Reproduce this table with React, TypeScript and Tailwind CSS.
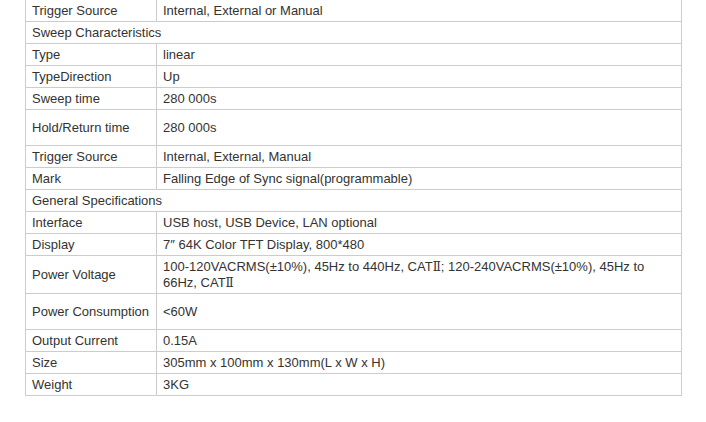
import React from "react";

type Row =
  | { kind: "head"; label: string }
  | { kind: "row"; label: string; value: React.ReactNode; h?: string };

const Two = () => <span className="font-['DejaVu_Serif',serif] text-[12px]">&#8545;</span>;

const rows: Row[] = [
  { kind: "row", label: "Trigger Source", value: "Internal, External or Manual" },
  { kind: "head", label: "Sweep Characteristics" },
  { kind: "row", label: "Type", value: "linear" },
  { kind: "row", label: "TypeDirection", value: "Up" },
  { kind: "row", label: "Sweep time", value: "280 000s" },
  { kind: "row", label: "Hold/Return time", value: "280 000s", h: "h-[36px]" },
  { kind: "row", label: "Trigger Source", value: "Internal, External, Manual" },
  { kind: "row", label: "Mark", value: "Falling Edge of Sync signal(programmable)" },
  { kind: "head", label: "General Specifications" },
  { kind: "row", label: "Interface", value: "USB host, USB Device, LAN optional" },
  { kind: "row", label: "Display", value: "7\u2033 64K Color TFT Display, 800*480" },
  {
    kind: "row",
    label: "Power Voltage",
    value: (
      <>
        100-120VACRMS(±10%), 45Hz to 440Hz, CAT<Two />; 120-240VACRMS(±10%), 45Hz to
        <br />
        66Hz, CAT<Two />
      </>
    ),
    h: "h-[38px]",
  },
  { kind: "row", label: "Power Consumption", value: "<60W", h: "h-[36px]" },
  { kind: "row", label: "Output Current", value: "0.15A" },
  { kind: "row", label: "Size", value: "305mm x 100mm x 130mm(L x W x H)" },
  { kind: "row", label: "Weight", value: "3KG" },
];

const App = () => {
  return (
    <div className="w-[706px] h-[422px] bg-white overflow-hidden font-['Liberation_Sans',Arial,sans-serif] text-[13px] text-[#333333]">
      <div className="ml-[25px] -mt-px w-[657px] border border-b-0 border-[#cccccc]">
        {rows.map((r, i) =>
          r.kind === "head" ? (
            <div key={i} className="flex items-center h-[22px] border-b border-[#cccccc] px-[6px]">
              {r.label}
            </div>
          ) : (
            <div key={i} className={`flex border-b border-[#cccccc] ${r.h ?? "h-[22px]"}`}>
              <div className="w-[131px] shrink-0 flex items-center border-r border-[#cccccc] px-[6px] whitespace-nowrap">
                {r.label}
              </div>
              <div className="flex-1 flex items-center px-[6px] leading-[16px]">
                <div>{r.value}</div>
              </div>
            </div>
          )
        )}
      </div>
    </div>
  );
};

export default App;
